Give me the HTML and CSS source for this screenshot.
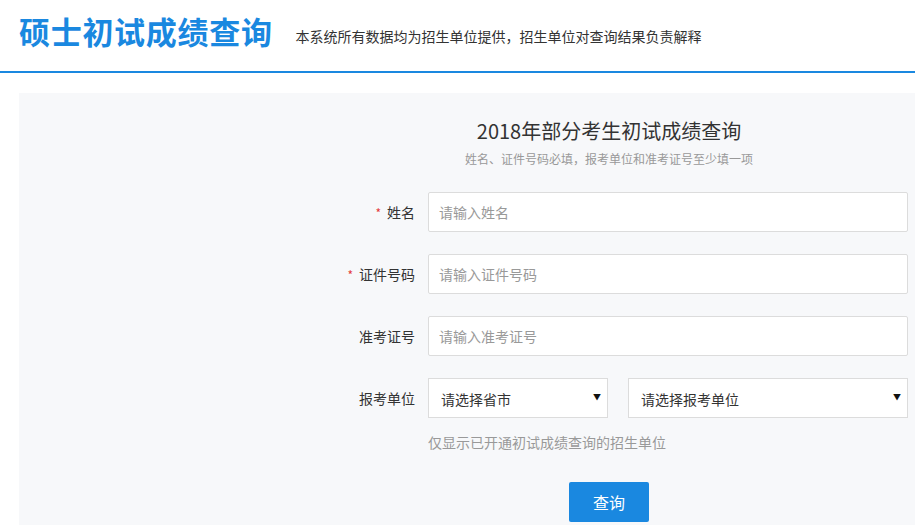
FILE: index.html
```html
<!DOCTYPE html>
<html lang="zh-CN">
<head>
    <meta charset="UTF-8">
    <meta name="viewport" content="width=device-width, initial-scale=1.0">
    <title>硕士初试成绩查询</title>
    <link rel="stylesheet" href="styles.css">
</head>
<body>
    <div class="header">
        <h1>硕士初试成绩查询</h1>
        <p class="header-note">本系统所有数据均为招生单位提供，招生单位对查询结果负责解释</p>
    </div>

    <div class="panel">
        <div class="panel-inner">
            <h2 class="panel-title">2018年部分考生初试成绩查询</h2>
            <p class="panel-note">姓名、证件号码必填，报考单位和准考证号至少填一项</p>

            <form id="queryForm">
                <div class="form-row">
                    <label for="xm"><span class="required">*</span>姓名</label>
                    <input type="text" id="xm" name="xm" placeholder="请输入姓名">
                </div>
                <div class="form-row">
                    <label for="zjhm"><span class="required">*</span>证件号码</label>
                    <input type="text" id="zjhm" name="zjhm" placeholder="请输入证件号码">
                </div>
                <div class="form-row">
                    <label for="ksbh">准考证号</label>
                    <input type="text" id="ksbh" name="ksbh" placeholder="请输入准考证号">
                </div>
                <div class="form-row">
                    <label for="ssdm">报考单位</label>
                    <div class="select-box province">
                        <select id="ssdm" name="ssdm">
                            <option value="">请选择省市</option>
                        </select>
                    </div>
                    <div class="select-box unit">
                        <select id="dwdm" name="dwdm">
                            <option value="">请选择报考单位</option>
                        </select>
                    </div>
                </div>
                <p class="form-hint">仅显示已开通初试成绩查询的招生单位</p>
                <div class="form-actions">
                    <input type="submit" value="查询" class="query-button">
                </div>
            </form>
        </div>
    </div>

    <script>
        document.getElementById("queryForm").addEventListener("submit", function(event) {
            event.preventDefault();
        });
    </script>
</body>
</html>
```

FILE: styles.css
```css
html, body {
    overflow: hidden;
}

body {
    font-family: "Noto Sans CJK SC", "Liberation Sans", sans-serif;
    margin: 0;
    padding: 0;
    background-color: #fff;
    color: #333;
}

.header {
    display: flex;
    align-items: flex-start;
    height: 71px;
    padding-left: 19px;
    border-bottom: 2px solid #1a88e0;
}

.header h1 {
    margin: 11px 0 0;
    font-size: 31px;
    line-height: 40px;
    font-weight: bold;
    color: #1a88e0;
    letter-spacing: 0.7px;
}

.header-note {
    margin: 26px 0 0 23px;
    font-size: 14px;
    line-height: 20px;
    color: #333;
}

.panel {
    margin: 20px 0 0 19px;
    background-color: #f7f8fa;
    overflow: hidden;
}

.panel-inner {
    width: 1180px;
    padding: 26px 0 3px;
}

.panel-title {
    margin: 0;
    font-size: 20px;
    line-height: 24px;
    font-weight: normal;
    color: #333;
    text-align: center;
}

.panel-note {
    margin: 7px 0 0;
    font-size: 12px;
    line-height: 18px;
    color: #999;
    text-align: center;
}

#queryForm {
    margin-top: 24px;
}

.form-row {
    display: flex;
    align-items: center;
    height: 40px;
    margin-bottom: 22px;
}

.form-row label {
    width: 396px;
    margin-right: 13px;
    text-align: right;
    font-size: 14px;
    color: #333;
}

.required {
    color: #e4393c;
    font-size: 12px;
    margin-right: 6px;
}

.form-row input[type="text"] {
    width: 480px;
    height: 40px;
    padding: 0 10px;
    border: 1px solid #dcdcdc;
    border-radius: 2px;
    background-color: #fff;
    font-family: inherit;
    font-size: 14px;
    color: #333;
    box-sizing: border-box;
}

.form-row input::placeholder {
    color: #999;
}

.select-box {
    position: relative;
    height: 40px;
}

.select-box.province {
    width: 180px;
    margin-right: 20px;
}

.select-box.unit {
    width: 280px;
}

.select-box select {
    -webkit-appearance: none;
    appearance: none;
    width: 100%;
    height: 40px;
    padding: 2px 24px 0 12px;
    border: 1px solid #dcdcdc;
    border-radius: 0;
    background-color: #fff;
    font-family: inherit;
    font-size: 14px;
    color: #333;
    box-sizing: border-box;
}

.select-box::after {
    content: "\25BC";
    position: absolute;
    right: 7px;
    top: 14px;
    font-size: 8px;
    line-height: 10px;
    color: #111;
    pointer-events: none;
}

.form-hint {
    margin: -8px 0 0 409px;
    font-size: 14px;
    line-height: 20px;
    color: #999;
}

.form-actions {
    margin-top: 30px;
    text-align: center;
}

.query-button {
    width: 80px;
    height: 40px;
    background-color: #1a88e0;
    color: #fff;
    border: none;
    border-radius: 2px;
    font-family: inherit;
    font-size: 16px;
    cursor: pointer;
}
```
